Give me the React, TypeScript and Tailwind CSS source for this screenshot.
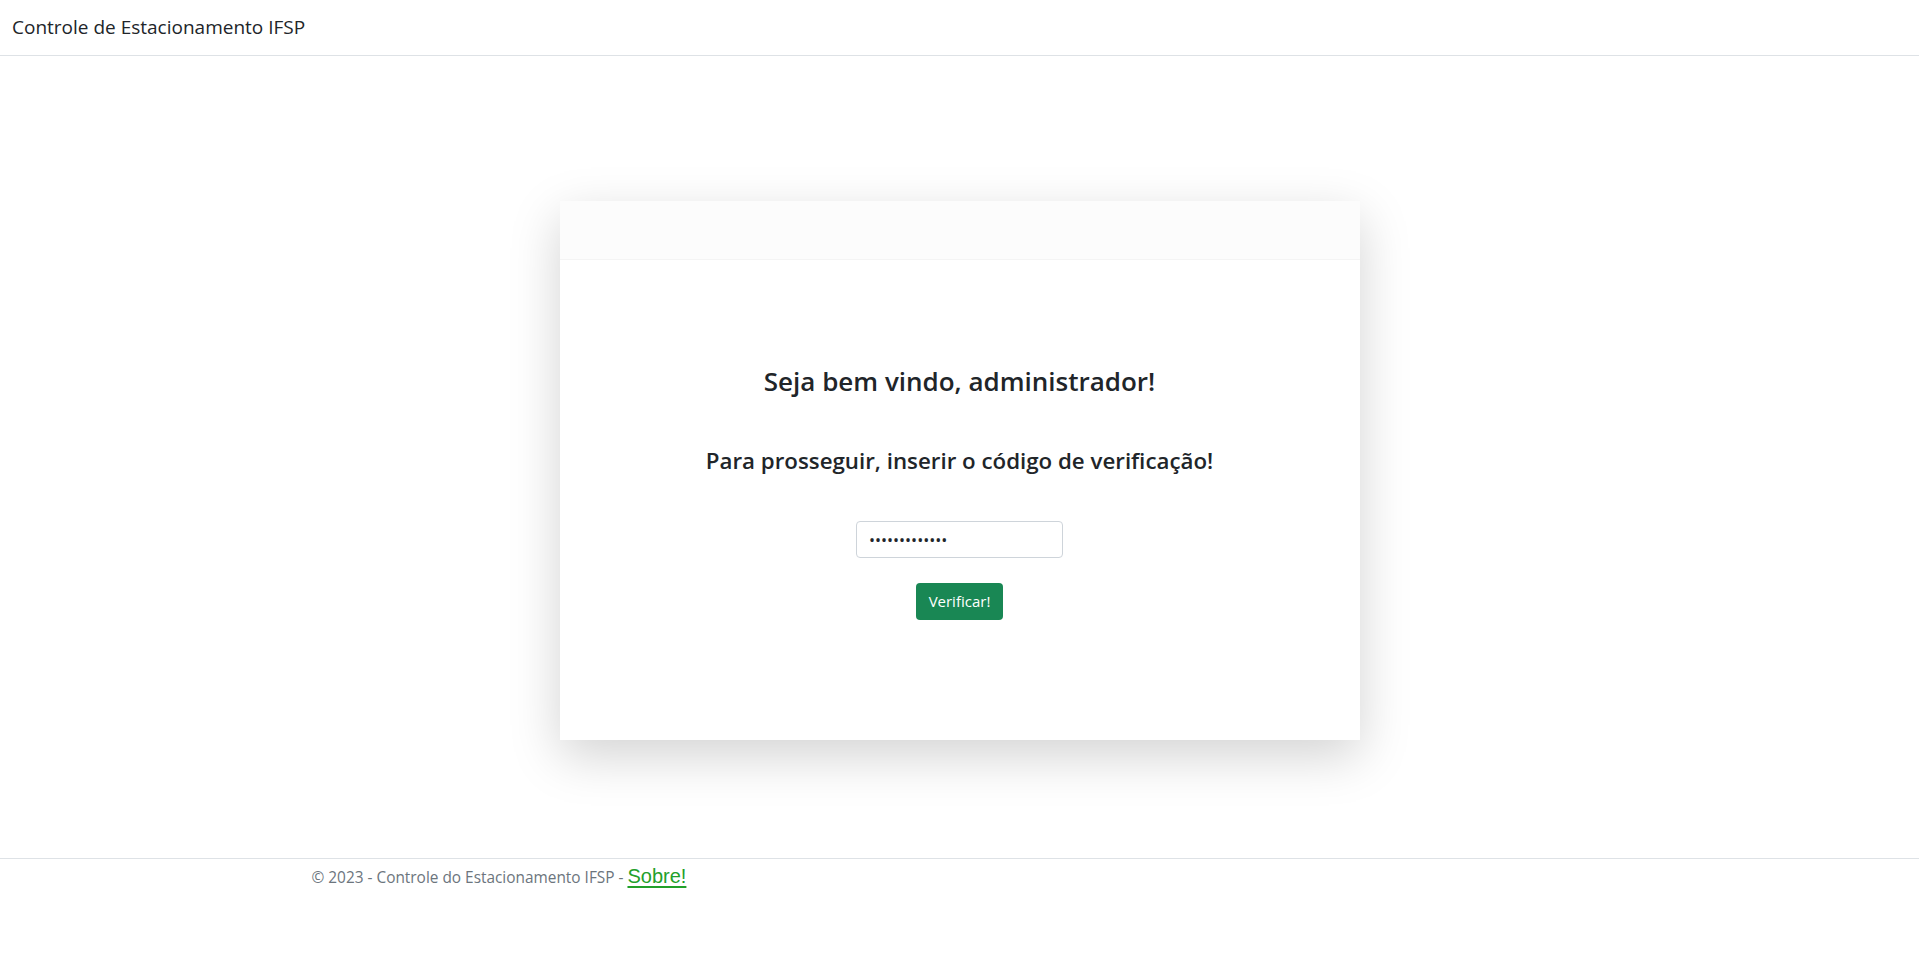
import React from 'react';

const font = { fontFamily: '"Open Sans", "Noto Sans", sans-serif' };

const App: React.FC = () => {
    return (
        <div className="min-h-screen bg-white text-[#212529]" style={font}>
            <header className="h-[56px] border-b border-[#dee2e6] flex items-center px-3">
                <span className="text-[19px] leading-[30px] -mt-[2px]">Controle de Estacionamento IFSP</span>
            </header>

            <main className="pt-[145px] pb-[118px]">
                <div className="w-[800px] mx-auto bg-white shadow-[0_16px_48px_rgba(0,0,0,0.175)]">
                    <div className="h-[59px] bg-[#fcfcfc] border-b border-[#f4f4f4]"></div>
                    <div className="h-[480px] flex flex-col items-center pt-[104px]">
                        <h3 className="text-[26px] leading-[34px] font-semibold">Seja bem vindo, administrador!</h3>
                        <h4 className="mt-[48px] text-[22.3px] leading-[29px] font-semibold">
                            Para prosseguir, inserir o código de verificação!
                        </h4>
                        <input
                            type="password"
                            defaultValue="1234567890123"
                            className="mt-[46px] w-[207px] h-[37px] px-3 border border-[#ced4da] rounded-[4px] text-base outline-none"
                        />
                        <button className="mt-[25px] h-[37px] px-[13px] bg-[#198754] text-white text-[15px] rounded-[4px]">
                            Verificar!
                        </button>
                    </div>
                </div>
            </main>

            <footer className="border-t border-[#dee2e6]">
                <div className="w-[1320px] mx-auto px-3 pt-[3px] text-[15.4px] text-[#6c757d] leading-[28px]">
                    © 2023 - Controle do Estacionamento IFSP -{' '}
                    <a
                        href="#"
                        className="text-[#22a02a] text-[20px] underline underline-offset-[3px]"
                        style={{ fontFamily: '"Liberation Sans", Arial, sans-serif' }}
                    >
                        Sobre!
                    </a>
                </div>
            </footer>
        </div>
    );
};

export default App;
